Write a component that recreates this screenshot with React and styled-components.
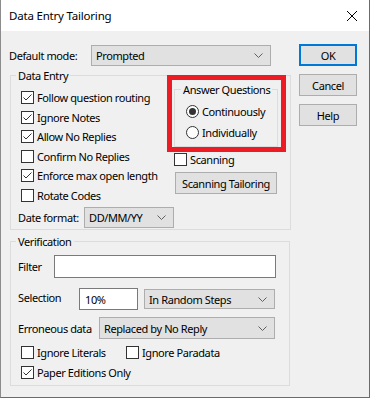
import React from 'react';
import styled, { createGlobalStyle } from 'styled-components';

const Global = createGlobalStyle`
  * { box-sizing: border-box; }
  body {
    margin: 0;
    background: #ffffff;
  }
`;

const Window = styled.div`
  width: 370px;
  height: 398px;
  display: flex;
  flex-direction: column;
  background: #f0f0f0;
  border-left: 1px solid #8c8c8c;
  border-right: 1px solid #6b6b6b;
  border-bottom: 1px solid #6b6b6b;
  font-family: 'Noto Sans', 'DejaVu Sans', sans-serif;
  font-size: 11px;
  letter-spacing: -0.4px;
  color: #000000;
`;

const TitleBar = styled.div`
  height: 31px;
  flex: none;
  display: flex;
  align-items: center;
  justify-content: space-between;
  padding: 0 6px 0 8px;
  background: #ffffff;
  font-size: 11.5px;
  letter-spacing: -0.2px;
`;

const Body = styled.div`
  display: flex;
  align-items: flex-start;
  padding: 13px 0 0 8px;
`;

const Main = styled.div`
  width: 282px;
  display: flex;
  flex-direction: column;
`;

const Side = styled.div`
  width: 58px;
  margin-left: 8px;
  display: flex;
  flex-direction: column;
  gap: 8px;
`;

const Button = styled.button`
  height: 22px;
  width: ${p => p.$width || 58}px;
  margin-left: ${p => p.$indent || 0}px;
  padding: 0;
  background: #e1e1e1;
  border: ${p => (p.$default ? '2px solid #0078d7' : '1px solid #adadad')};
  font: inherit;
  letter-spacing: inherit;
  color: #000;
  text-align: center;
  white-space: nowrap;
`;

const Row = styled.div`
  display: flex;
  align-items: center;
  height: ${p => p.$h || 22}px;
  margin-top: ${p => p.$mt || 0}px;
  margin-left: ${p => p.$ml || 0}px;
`;

const Label = styled.span`
  width: ${p => p.$w}px;
  flex: none;
  white-space: nowrap;
  margin-top: ${p => (p.$up ? -4 : 0)}px;
`;

const ComboBox = styled.div`
  width: ${p => p.$w}px;
  height: ${p => p.$h || 21}px;
  margin-left: ${p => p.$ml || 0}px;
  flex: none;
  display: flex;
  align-items: center;
  justify-content: space-between;
  padding: 0 7px 0 4px;
  background: #e1e1e1;
  border: 1px solid #adadad;
  white-space: nowrap;
`;

const TextBox = styled.div`
  width: ${p => p.$w}px;
  height: ${p => p.$h || 22}px;
  flex: none;
  display: flex;
  align-items: center;
  padding-left: 5px;
  background: #ffffff;
  border: 1px solid #7a7a7a;
`;

const Group = styled.div`
  position: relative;
  width: ${p => p.$w}px;
  height: ${p => (p.$h ? `${p.$h}px` : 'auto')};
  margin: ${p => p.$mt || 0}px 0 0 ${p => p.$ml || 0}px;
  padding: ${p => p.$pad};
  border: 1px solid #dcdcdc;
  flex: none;
`;

const Caption = styled.span`
  position: absolute;
  top: -8px;
  left: ${p => p.$left || 5}px;
  padding: 0 2px;
  line-height: 15px;
  background: #f0f0f0;
  white-space: nowrap;
`;

const Highlight = styled.span`
  position: absolute;
  left: -8px;
  top: -15px;
  width: 119px;
  height: 77px;
  border: 5px solid #ed1c24;
  pointer-events: none;
`;

const Columns = styled.div`
  display: flex;
  align-items: flex-start;
`;

const LeftCol = styled.div`
  width: 153px;
  flex: none;
  display: flex;
  flex-direction: column;
`;

const RightCol = styled.div`
  display: flex;
  flex-direction: column;
  align-items: flex-start;
  margin-top: 1px;
`;

const CheckRow = styled.label`
  display: flex;
  align-items: center;
  gap: 3px;
  height: ${p => p.$h || 19.5}px;
  width: ${p => (p.$w ? `${p.$w}px` : 'auto')};
  margin-top: ${p => p.$mt || 0}px;
  margin-left: ${p => p.$ml || 0}px;
  white-space: nowrap;
  flex: none;
`;

const Box = styled.span`
  width: 13px;
  height: 13px;
  flex: none;
  display: flex;
  align-items: center;
  justify-content: center;
  background: #ffffff;
  border: 1px solid #333333;
`;

const Round = styled.span`
  width: 13px;
  height: 13px;
  flex: none;
  display: flex;
  align-items: center;
  justify-content: center;
  border-radius: 50%;
  background: #ffffff;
  border: 1px solid #333333;

  &::after {
    content: '';
    display: ${p => (p.$on ? 'block' : 'none')};
    width: 7px;
    height: 7px;
    border-radius: 50%;
    background: #333333;
  }
`;

const RadioRow = styled.div`
  display: flex;
  align-items: center;
  gap: 3px;
  height: 21px;
`;

const Chevron = () => (
  <svg width="9" height="5" viewBox="0 0 9 5">
    <path d="M0.5 0.5 L4.5 4.5 L8.5 0.5" fill="none" stroke="#606060" strokeWidth="1" />
  </svg>
);

const CloseIcon = () => (
  <svg width="22" height="22" viewBox="0 0 22 22">
    <path d="M6 6 L16 16 M16 6 L6 16" stroke="#000" strokeWidth="1" />
  </svg>
);

const Check = ({ on, children, ...rest }) => (
  <CheckRow {...rest}>
    <Box>
      {on && (
        <svg width="11" height="11" viewBox="0 0 11 11">
          <path d="M1.5 5.5 L4 8 L9.5 2.5" fill="none" stroke="#333" strokeWidth="1" />
        </svg>
      )}
    </Box>
    {children}
  </CheckRow>
);

const Combo = ({ children, ...rest }) => (
  <ComboBox {...rest}>
    <span>{children}</span>
    <Chevron />
  </ComboBox>
);

const App = () => {
  return (
    <>
      <Global />
      <Window>
        <TitleBar>
          <span>Data Entry Tailoring</span>
          <CloseIcon />
        </TitleBar>
        <Body>
          <Main>
            <Row>
              <Label $w={82}>Default mode:</Label>
              <Combo $w={180}>Prompted</Combo>
            </Row>

            <Group $w={281} $mt={9} $ml={1} $pad="12px 0 1px 10px">
              <Caption>Data Entry</Caption>
              <Columns>
                <LeftCol>
                  <Check on>Follow question routing</Check>
                  <Check on>Ignore Notes</Check>
                  <Check on>Allow No Replies</Check>
                  <Check>Confirm No Replies</Check>
                  <Check on>Enforce max open length</Check>
                  <Check>Rotate Codes</Check>
                  <Row $h={21} $mt={2} $ml={-3}>
                    <Label $w={66}>Date format:</Label>
                    <Combo $w={90}>DD/MM/YY</Combo>
                  </Row>
                </LeftCol>
                <RightCol>
                  <Group $w={104} $h={58} $pad="11px 0 0 11px">
                    <Caption $left={6}>Answer Questions</Caption>
                    <RadioRow>
                      <Round $on />
                      Continuously
                    </RadioRow>
                    <RadioRow>
                      <Round />
                      Individually
                    </RadioRow>
                    <Highlight />
                  </Group>
                  <Check $h={13} $mt={6}>Scanning</Check>
                  <Button $width={102} $indent={1} style={{ marginTop: 6 }}>
                    Scanning Tailoring
                  </Button>
                </RightCol>
              </Columns>
            </Group>

            <Group $w={280} $mt={11} $ml={1} $pad="13px 0 3px 7px">
              <Caption>Verification</Caption>
              <Row $h={23}>
                <Label $w={36}>Filter</Label>
                <TextBox $w={222} $h={23} />
              </Row>
              <Row $mt={10}>
                <Label $w={61} $up>Selection</Label>
                <TextBox $w={59}>10%</TextBox>
                <Combo $w={131} $h={20} $ml={6}>In Random Steps</Combo>
              </Row>
              <Row $mt={7}>
                <Label $w={81}>Erroneous data</Label>
                <Combo $w={176} $h={22}>Replaced by No Reply</Combo>
              </Row>
              <Row $h={19.5} $mt={4}>
                <Check $w={105} $ml={3}>Ignore Literals</Check>
                <Check>Ignore Paradata</Check>
              </Row>
              <Check on $ml={3}>Paper Editions Only</Check>
            </Group>
          </Main>
          <Side>
            <Button $default>OK</Button>
            <Button>Cancel</Button>
            <Button>Help</Button>
          </Side>
        </Body>
      </Window>
    </>
  );
};

export default App;
